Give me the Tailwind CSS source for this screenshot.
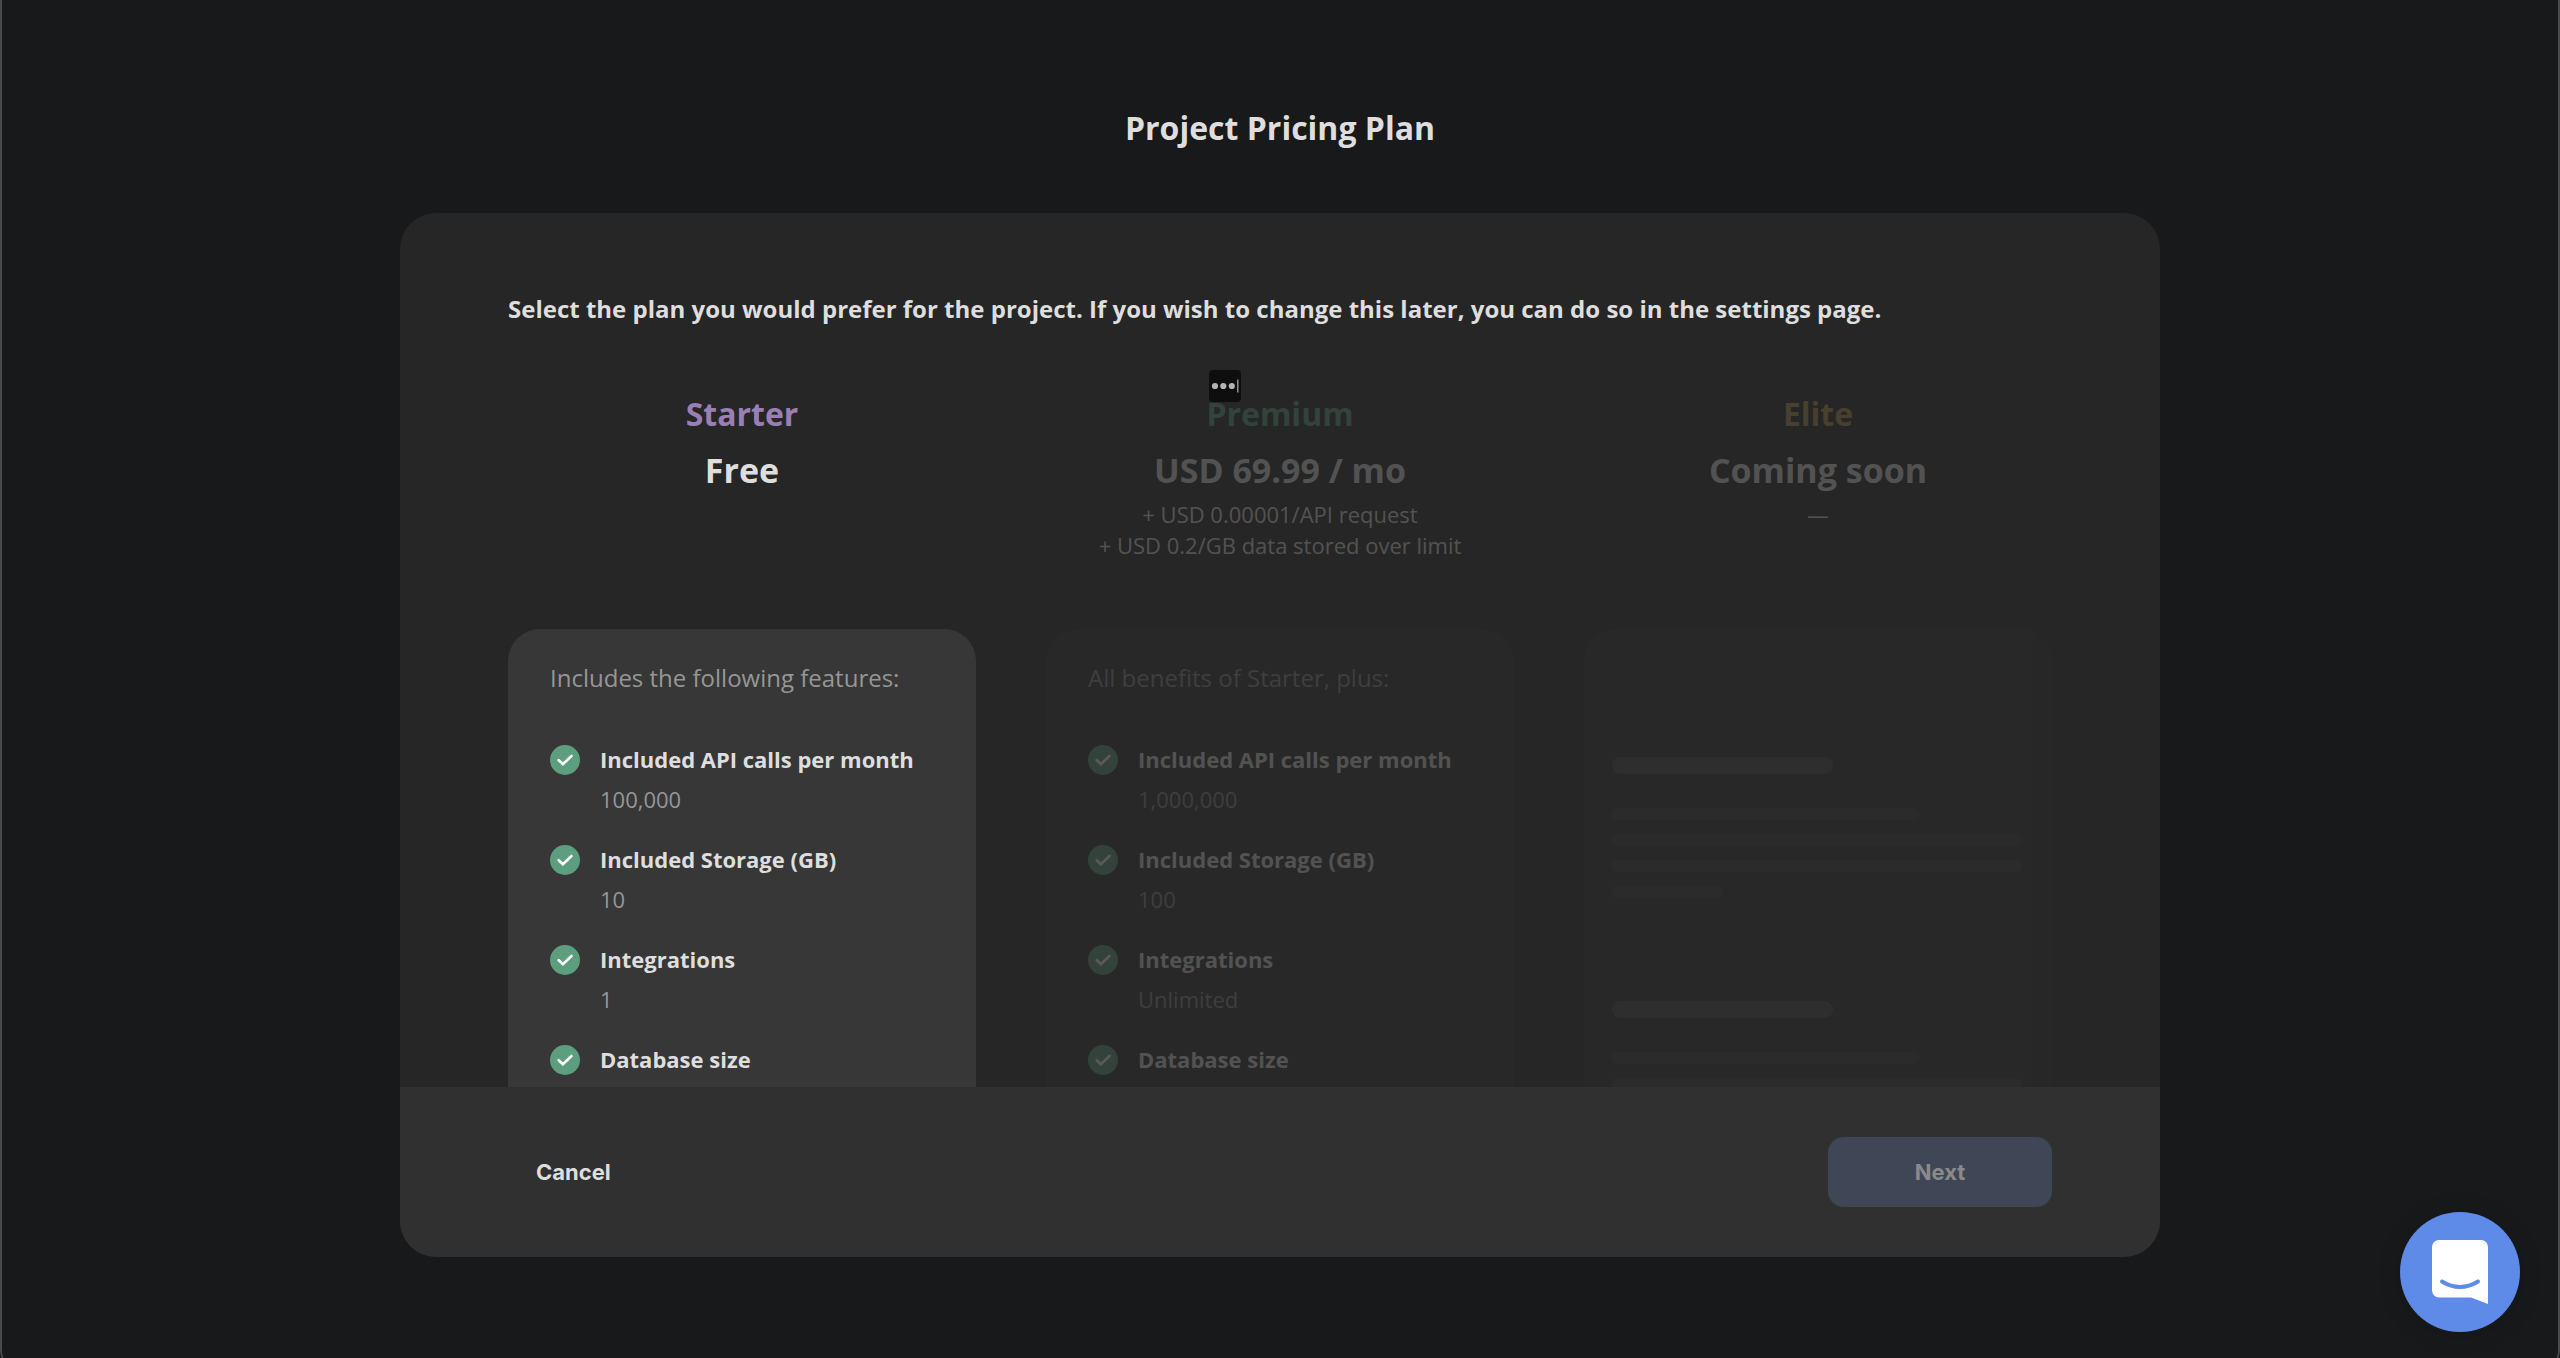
<!DOCTYPE html>
<html lang="en">
<head>
<meta charset="utf-8">
<meta name="viewport" content="width=device-width, initial-scale=1">
<title>Project Pricing Plan</title>
<script src="https://cdn.jsdelivr.net/npm/@tailwindcss/browser@4"></script>
</head>
<body class="bg-[#18191b] font-['Open_Sans',sans-serif] text-[#dedede]">

<!-- Check mark shared by all feature rows -->
<svg class="hidden" aria-hidden="true">
  <symbol id="check" viewBox="0 0 30 30">
    <circle cx="15" cy="15" r="15" fill="#5d9e7f"/>
    <path d="M8.7 15.2 L12.9 19.2 L21.5 11" fill="none" stroke="#fff" stroke-width="2.6" stroke-linecap="round" stroke-linejoin="miter"/>
  </symbol>
</svg>

<div class="flex h-screen min-h-[900px] flex-col items-center px-10 pt-[106px] pb-[101px]">
  <h1 class="text-[32px] leading-[44px] font-bold">Project Pricing Plan</h1>

  <main class="mt-[63px] flex min-h-0 w-full max-w-[1760px] flex-1 flex-col overflow-hidden rounded-[36px] bg-[#262626]">
    <div class="flex min-h-0 flex-1 flex-col overflow-hidden px-[108px] pt-20">
      <p class="text-[24px] leading-[32px] font-bold">Select the plan you would prefer for the project. If you wish to change this later, you can do so in the settings page.</p>

      <div class="mt-[61px] grid min-h-0 flex-1 grid-cols-3 gap-[70px]">

        <section class="flex min-h-0 flex-col">
          <header class="h-[243px] shrink-0 text-center">
            <h2 class="text-[32px] leading-[56px] font-bold text-[#9a7fb5]">Starter</h2>
            <p class="text-[34px] leading-[57px] font-bold">Free</p>
          </header>
          <div class="min-h-0 flex-1 rounded-t-[32px] bg-[#373737] px-[42px] pt-[33px]">
            <p class="text-[24px] leading-[32px] text-[#969696]">Includes the following features:</p>
            <ul class="mt-[51px] flex flex-col gap-8 text-[22px] leading-[28px]">
              <li class="flex gap-5">
                <svg class="size-[30px] shrink-0" aria-hidden="true"><use href="#check"/></svg>
                <div class="flex flex-col gap-3"><h3 class="font-bold">Included API calls per month</h3><p class="text-[#969696]">100,000</p></div>
              </li>
              <li class="flex gap-5">
                <svg class="size-[30px] shrink-0" aria-hidden="true"><use href="#check"/></svg>
                <div class="flex flex-col gap-3"><h3 class="font-bold">Included Storage (GB)</h3><p class="text-[#969696]">10</p></div>
              </li>
              <li class="flex gap-5">
                <svg class="size-[30px] shrink-0" aria-hidden="true"><use href="#check"/></svg>
                <div class="flex flex-col gap-3"><h3 class="font-bold">Integrations</h3><p class="text-[#969696]">1</p></div>
              </li>
              <li class="flex gap-5">
                <svg class="size-[30px] shrink-0" aria-hidden="true"><use href="#check"/></svg>
                <h3 class="font-bold">Database size</h3>
              </li>
            </ul>
          </div>
        </section>

        <section class="relative min-h-0">
          <div class="flex h-full flex-col opacity-24">
            <header class="h-[243px] shrink-0 text-center">
              <h2 class="text-[32px] leading-[56px] font-bold text-[#5d9e7f]">Premium</h2>
              <p class="text-[34px] leading-[57px] font-bold">USD 69.99 / mo</p>
              <p class="text-[22px] leading-[31px]">+ USD 0.00001/API request</p>
              <p class="text-[22px] leading-[31px]">+ USD 0.2/GB data stored over limit</p>
            </header>
            <div class="min-h-0 flex-1 rounded-t-[32px] bg-[#303030] px-[42px] pt-[33px]">
              <p class="text-[24px] leading-[32px] text-[#8a8a8a]">All benefits of Starter, plus:</p>
              <ul class="mt-[51px] flex flex-col gap-8 text-[22px] leading-[28px]">
                <li class="flex gap-5">
                  <svg class="size-[30px] shrink-0" aria-hidden="true"><use href="#check"/></svg>
                  <div class="flex flex-col gap-3"><h3 class="font-bold">Included API calls per month</h3><p class="text-[#8a8a8a]">1,000,000</p></div>
                </li>
                <li class="flex gap-5">
                  <svg class="size-[30px] shrink-0" aria-hidden="true"><use href="#check"/></svg>
                  <div class="flex flex-col gap-3"><h3 class="font-bold">Included Storage (GB)</h3><p class="text-[#8a8a8a]">100</p></div>
                </li>
                <li class="flex gap-5">
                  <svg class="size-[30px] shrink-0" aria-hidden="true"><use href="#check"/></svg>
                  <div class="flex flex-col gap-3"><h3 class="font-bold">Integrations</h3><p class="text-[#8a8a8a]">Unlimited</p></div>
                </li>
                <li class="flex gap-5">
                  <svg class="size-[30px] shrink-0" aria-hidden="true"><use href="#check"/></svg>
                  <h3 class="font-bold">Database size</h3>
                </li>
              </ul>
            </div>
          </div>
          <!-- Typing badge floating over the plan name -->
          <svg class="absolute -top-4 left-[163px] size-8" viewBox="0 0 32 32" aria-hidden="true">
            <rect width="32" height="32" rx="4" fill="#0e0e0e"/>
            <g fill="#b4b4b4"><circle cx="6" cy="16" r="3.1"/><circle cx="14.3" cy="16" r="3.1"/><circle cx="22.8" cy="16" r="3.1"/></g>
            <path d="M28.8 9.5v13" stroke="#9a9a9a" stroke-width="1.4"/>
          </svg>
        </section>

        <section class="flex min-h-0 flex-col opacity-24">
          <header class="h-[243px] shrink-0 text-center">
            <h2 class="text-[32px] leading-[56px] font-bold text-[#b0924f]">Elite</h2>
            <p class="text-[34px] leading-[57px] font-bold">Coming soon</p>
            <p class="text-[22px] leading-[31px]">—</p>
          </header>
          <div class="min-h-0 flex-1 overflow-hidden rounded-t-[32px] bg-[#303030] pt-32 pr-[30px] pl-7" aria-hidden="true">
            <div class="h-[17px] w-[54%] rounded-full bg-[#4a4a4a]"></div>
            <div class="mt-[34px] flex flex-col gap-[14px]">
              <div class="h-3 w-3/4 rounded-full bg-[#3d3d3d]"></div>
              <div class="h-3 w-full rounded-full bg-[#3d3d3d]"></div>
              <div class="h-3 w-full rounded-full bg-[#3d3d3d]"></div>
              <div class="h-3 w-[27%] rounded-full bg-[#3d3d3d]"></div>
            </div>
            <div class="mt-[103px] h-[17px] w-[54%] rounded-full bg-[#4a4a4a]"></div>
            <div class="mt-[34px] flex flex-col gap-[14px]">
              <div class="h-3 w-3/4 rounded-full bg-[#3d3d3d]"></div>
              <div class="h-3 w-full rounded-full bg-[#3d3d3d]"></div>
            </div>
          </div>
        </section>
      </div>
    </div>

    <footer class="flex shrink-0 items-center justify-between bg-[#303030] px-[108px] py-[50px] font-['Inter',sans-serif] text-[22px] leading-[30px] font-bold">
      <button type="button" class="h-[70px] rounded-2xl px-7">Cancel</button>
      <button type="button" class="h-[70px] w-[224px] rounded-2xl bg-[#3f4757] text-[#8a8a8a]" disabled>Next</button>
    </footer>
  </main>
</div>

<button type="button" aria-label="Open chat" class="fixed right-10 bottom-[26px] flex size-[120px] items-center justify-center rounded-full bg-[#5e8ae8] shadow-[0_2px_24px_rgba(0,0,0,0.15)]">
  <svg class="h-16 w-14" viewBox="0 0 56 64" aria-hidden="true">
    <path d="M7 0H49a7 7 0 0 1 7 7V64L39 57.5H7a7 7 0 0 1-7-7V7a7 7 0 0 1 7-7Z" fill="#fff"/>
    <path d="M10 41.5Q28 52.5 46 41.5" fill="none" stroke="#5e8ae8" stroke-width="4" stroke-linecap="round"/>
  </svg>
</button>

<!-- Window edge -->
<div class="pointer-events-none fixed inset-x-0 top-0 -bottom-3 rounded-b-[20px] border-x-2 border-[#4a4a4a]"></div>
</body>
</html>
